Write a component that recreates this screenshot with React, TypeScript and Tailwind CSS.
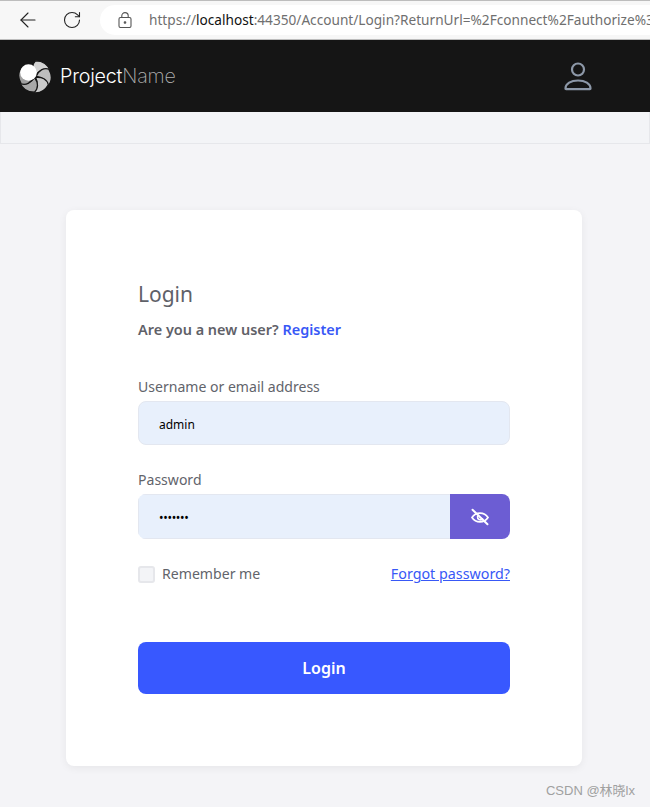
import { ArrowLeft, RotateCw } from "lucide-react"

const petals = [
  { angle: 0, fill: "#d2d2d2" },
  { angle: 60, fill: "#bdbdbd" },
  { angle: 120, fill: "#cacaca" },
  { angle: 180, fill: "#a8a8a8" },
  { angle: 240, fill: "#a0a0a0" },
]

function Logo() {
  return (
    <svg width="32" height="33" viewBox="0 0 32 32" className="shrink-0">
      {petals.map((p) => (
        <path
          key={p.angle}
          d="M16.500 15C12.500 10 12.500 4 16.500.3 23 .3 29 3.500 31.200 10.500 26 8 20.500 9.500 16.500 15z"
          fill={p.fill}
          stroke="#151515"
          strokeWidth="1.300"
          transform={`rotate(${p.angle} 16 16)`}
        />
      ))}
      <circle cx="9.500" cy="12" r="8.300" fill="#ffffff" />
    </svg>
  )
}

function UserGlyph() {
  return (
    <svg width="30" height="30" viewBox="0 0 30 30" fill="none" stroke="#8d98a8" strokeWidth="2.200">
      <circle cx="15" cy="8.500" r="6" />
      <path d="M2.500 27.500c0-5 5.500-8 12.500-8s12.500 3 12.500 8c0 .4-.2.6-.6.6H3.100c-.4 0-.6-.2-.6-.6z" />
    </svg>
  )
}

function EyeSlash() {
  return (
    <svg width="20" height="18" viewBox="0 0 20 18" fill="none" stroke="#ffffff" strokeWidth="1.700" strokeLinecap="round">
      <path d="M2 9.500c1.800-2.800 4.600-4.300 8-4.300s6.200 1.500 8 4.300c-1.800 2.800-4.600 4.300-8 4.300s-6.200-1.500-8-4.300z" />
      <path d="M7.600 8.500a2.800 2.800 0 0 0 4.800 2.400" />
      <path d="M2.500 1.800l15 14.500" strokeWidth="2" />
    </svg>
  )
}

export default function App() {
  return (
    <div className="relative h-[807px] w-[650px] overflow-hidden bg-[#f4f4f7] font-['Noto_Sans',sans-serif]">
      {/* browser toolbar */}
      <div className="flex h-[40px] items-center border-t border-b border-t-[#bdbdbd] border-b-[#bdbdbd] bg-[#f7f7f7]">
        <ArrowLeft className="ml-[16px] h-[24px] w-[24px] text-[#222]" strokeWidth={1.100} />
        <RotateCw className="ml-[22px] h-[20px] w-[20px] text-[#222]" strokeWidth={1.300} />
        <div className="ml-[18px] flex h-[30px] flex-1 items-center overflow-hidden rounded-l-full bg-white pl-[18px]">
          <svg width="14" height="16" viewBox="0 0 14 16" fill="none" stroke="#555" strokeWidth="1.100" className="shrink-0">
            <rect x="1" y="5.500" width="12" height="10" rx="1.500" />
            <path d="M3.800 5.500V3.800a3.200 3.200 0 0 1 6.400 0v1.700" />
            <circle cx="7" cy="10.500" r="0.800" fill="#555" />
          </svg>
          <span className="ml-[17px] whitespace-nowrap text-[13.650px] text-[#6f6f6f]">
            https://<span className="text-[#111]">localhost</span>:44350/Account/Login?ReturnUrl=%2Fconnect%2Fauthorize%3Fc
          </span>
        </div>
      </div>

      {/* app header */}
      <div className="flex h-[72px] items-center justify-between bg-[#151515] pl-[19px] pr-[57px]">
        <div className="flex items-center gap-[9px]">
          <Logo />
          <span className="mt-[1px] font-['Inter',sans-serif] text-[19.700px] font-light leading-none tracking-[-0.2px] text-white">
            Project<span className="font-extralight text-[#b0b0b0]">Name</span>
          </span>
        </div>
        <UserGlyph />
      </div>

      {/* empty breadcrumb strip */}
      <div className="h-[32px] border border-t-0 border-[#e6e7eb] bg-[#f3f4f7]" />

      {/* login card */}
      <div className="ml-[66px] mt-[66px] h-[556px] w-[516px] rounded-[8px] bg-white px-[72px] pt-[68px] shadow-[0_2px_8px_rgba(0,0,0,0.06)]">
        <h1 className="text-[21px] leading-[32px] text-[#5f6168]">Login</h1>
        <p className="mt-[10px] text-[14.450px] font-semibold leading-[20px] text-[#5f6168]">
          Are you a new user? <a className="font-semibold text-[#3858f6]">Register</a>
        </p>

        <label className="mt-[37px] block text-[14.050px] leading-[20px] text-[#62646b]">Username or email address</label>
        <div className="mt-[4px] flex h-[44px] items-center rounded-[8px] border border-[#e3e7f0] bg-[#e8f0fc] pl-[20px] pt-[3px] text-[12px] text-black">
          admin
        </div>

        <label className="mt-[25px] block text-[14.050px] leading-[20px] text-[#62646b]">Password</label>
        <div className="mt-[4px] flex h-[45px] overflow-hidden rounded-[8px]">
          <div className="flex flex-1 items-center border border-r-0 border-[#e3e7f0] bg-[#e8f0fc] pl-[20px] pt-[2px] text-[12px] leading-none tracking-[-0.3px] text-black">
            •••••••
          </div>
          <div className="flex w-[60px] items-center justify-center bg-[#6c5dd3]">
            <EyeSlash />
          </div>
        </div>

        <div className="mt-[25px] flex items-center justify-between">
          <div className="flex items-center gap-[7px]">
            <span className="h-[17px] w-[17px] rounded-[3px] border-2 border-[#e6e7eb] bg-[#f3f4f7]" />
            <span className="text-[14.100px] leading-[20px] text-[#62646b]">Remember me</span>
          </div>
          <a className="text-[14.300px] leading-[20px] text-[#3858f6] underline">Forgot password?</a>
        </div>

        <button className="mt-[58px] flex h-[52px] w-full items-center justify-center rounded-[8px] bg-[#3858ff] text-[16px] font-semibold text-white">
          Login
        </button>
      </div>

      {/* watermark */}
      <span className="absolute bottom-[7px] right-[15px] font-['Liberation_Sans','Noto_Sans_CJK_SC',sans-serif] text-[13px] text-[#a0a0a0]">
        CSDN @林晓lx
      </span>
    </div>
  )
}
